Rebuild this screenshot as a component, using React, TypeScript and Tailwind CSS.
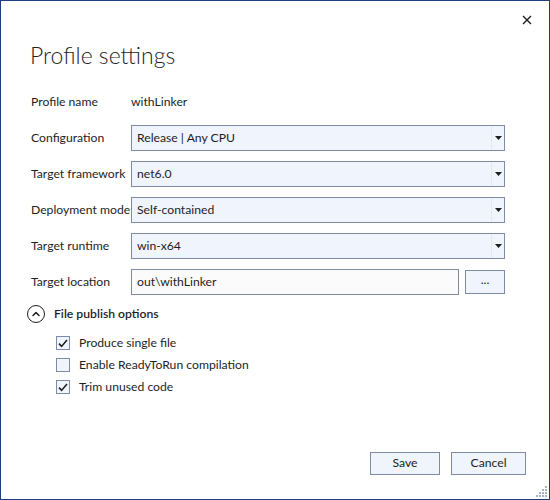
import { ChevronUp } from 'lucide-react'

const FONT = { fontFamily: '"Segoe UI", Lato, "Noto Sans", sans-serif' }

function Label({ text }: { text: string }) {
  return <div className="w-[100px] shrink-0 whitespace-nowrap text-[12.2px] leading-none text-[#1e1e1e]">{text}</div>
}

function Select({ value }: { value: string }) {
  return (
    <div className="flex h-[26px] flex-1 items-stretch border border-[#7d8ba5] bg-[#f0f4fc]">
      <div className="flex flex-1 items-center pl-[5px] text-[12.2px] text-[#1e1e1e]">{value}</div>
      <div className="flex w-[13px] items-center justify-center border-l border-[#e3e8f2]">
        <svg width="7" height="4" viewBox="0 0 7 4">
          <path d="M0 0h7L3.5 4z" fill="#1e1e1e" />
        </svg>
      </div>
    </div>
  )
}

function Check({ checked, label }: { checked: boolean; label: string }) {
  return (
    <div className="flex h-[22px] items-center">
      <div className="flex h-[14px] w-[14px] items-center justify-center border border-[#7d8ba5] bg-[#f0f4fc]">
        {checked && (
          <svg width="10" height="9" viewBox="0 0 10 9">
            <path d="M1 4.6l2.6 2.8L9 1" fill="none" stroke="#1e1e1e" strokeWidth="1.6" />
          </svg>
        )}
      </div>
      <span className="ml-[9px] whitespace-nowrap text-[12.2px] text-[#1e1e1e]">{label}</span>
    </div>
  )
}

function Grip() {
  const dots = [
    [9, 0],
    [6, 3], [9, 3],
    [3, 6], [6, 6], [9, 6],
    [0, 9], [3, 9], [6, 9], [9, 9],
  ]
  return (
    <svg width="11" height="11" viewBox="0 0 11 11">
      {dots.map(([x, y]) => (
        <rect key={`${x}-${y}`} x={x} y={y} width="2" height="2" fill="#a9b3c8" />
      ))}
    </svg>
  )
}

export default function App() {
  const rows = [
    { label: 'Configuration', value: 'Release | Any CPU' },
    { label: 'Target framework', value: 'net6.0' },
    { label: 'Deployment mode', value: 'Self-contained' },
    { label: 'Target runtime', value: 'win-x64' },
  ]

  return (
    <div className="relative flex h-[500px] w-[550px] flex-col border border-[#1d3f80] bg-white" style={FONT}>
      <button className="absolute right-[14px] top-[11px] flex h-[16px] w-[16px] items-center justify-center">
        <svg width="10" height="10" viewBox="0 0 10 10">
          <path d="M1 1l8 8M9 1L1 9" stroke="#1e1e1e" strokeWidth="1.4" />
        </svg>
      </button>

      <h1 className="ml-[29px] mt-[38px] text-[23px] font-light leading-[32px] text-[#1e1e1e]">Profile settings</h1>

      <div className="ml-[30px] mr-[44px] mt-[18px] flex flex-col gap-[10px]">
        <div className="flex h-[26px] items-center">
          <Label text="Profile name" />
          <span className="text-[12.2px] text-[#1e1e1e]">withLinker</span>
        </div>
        {rows.map((r) => (
          <div key={r.label} className="flex h-[26px] items-center">
            <Label text={r.label} />
            <Select value={r.value} />
          </div>
        ))}
        <div className="flex h-[26px] items-center">
          <Label text="Target location" />
          <div className="flex h-[26px] flex-1 items-center border border-[#7d8ba5] bg-[#fbfbfb] pl-[5px] text-[12.2px] text-[#1e1e1e]">
            out\withLinker
          </div>
          <button className="ml-[6px] flex h-[24px] w-[40px] items-center justify-center border border-[#7d8ba5] bg-[#f0f4fc] pb-[4px] text-[12.2px] text-[#1e1e1e]">
            ...
          </button>
        </div>
      </div>

      <div className="ml-[26px] mt-[9px] flex h-[20px] items-center">
        <div className="flex h-[18px] w-[18px] items-center justify-center rounded-full border border-[#1e1e1e]">
          <ChevronUp size={12} strokeWidth={3} color="#1e1e1e" />
        </div>
        <span className="ml-[9px] text-[12.2px] font-semibold text-[#1e1e1e]">File publish options</span>
      </div>

      <div className="ml-[55px] mt-[8px] flex flex-col">
        <Check checked label="Produce single file" />
        <Check checked={false} label="Enable ReadyToRun compilation" />
        <Check checked label="Trim unused code" />
      </div>

      <div className="mr-[23px] mt-auto mb-[24px] flex justify-end gap-[11px]">
        <button className="h-[23px] w-[70px] border border-[#7d8ba5] bg-[#f0f4fc] text-[12.2px] text-[#1e1e1e]">Save</button>
        <button className="h-[23px] w-[75px] border border-[#7d8ba5] bg-[#f0f4fc] text-[12.2px] text-[#1e1e1e]">Cancel</button>
      </div>

      <div className="absolute bottom-[2px] right-[2px]">
        <Grip />
      </div>
    </div>
  )
}
